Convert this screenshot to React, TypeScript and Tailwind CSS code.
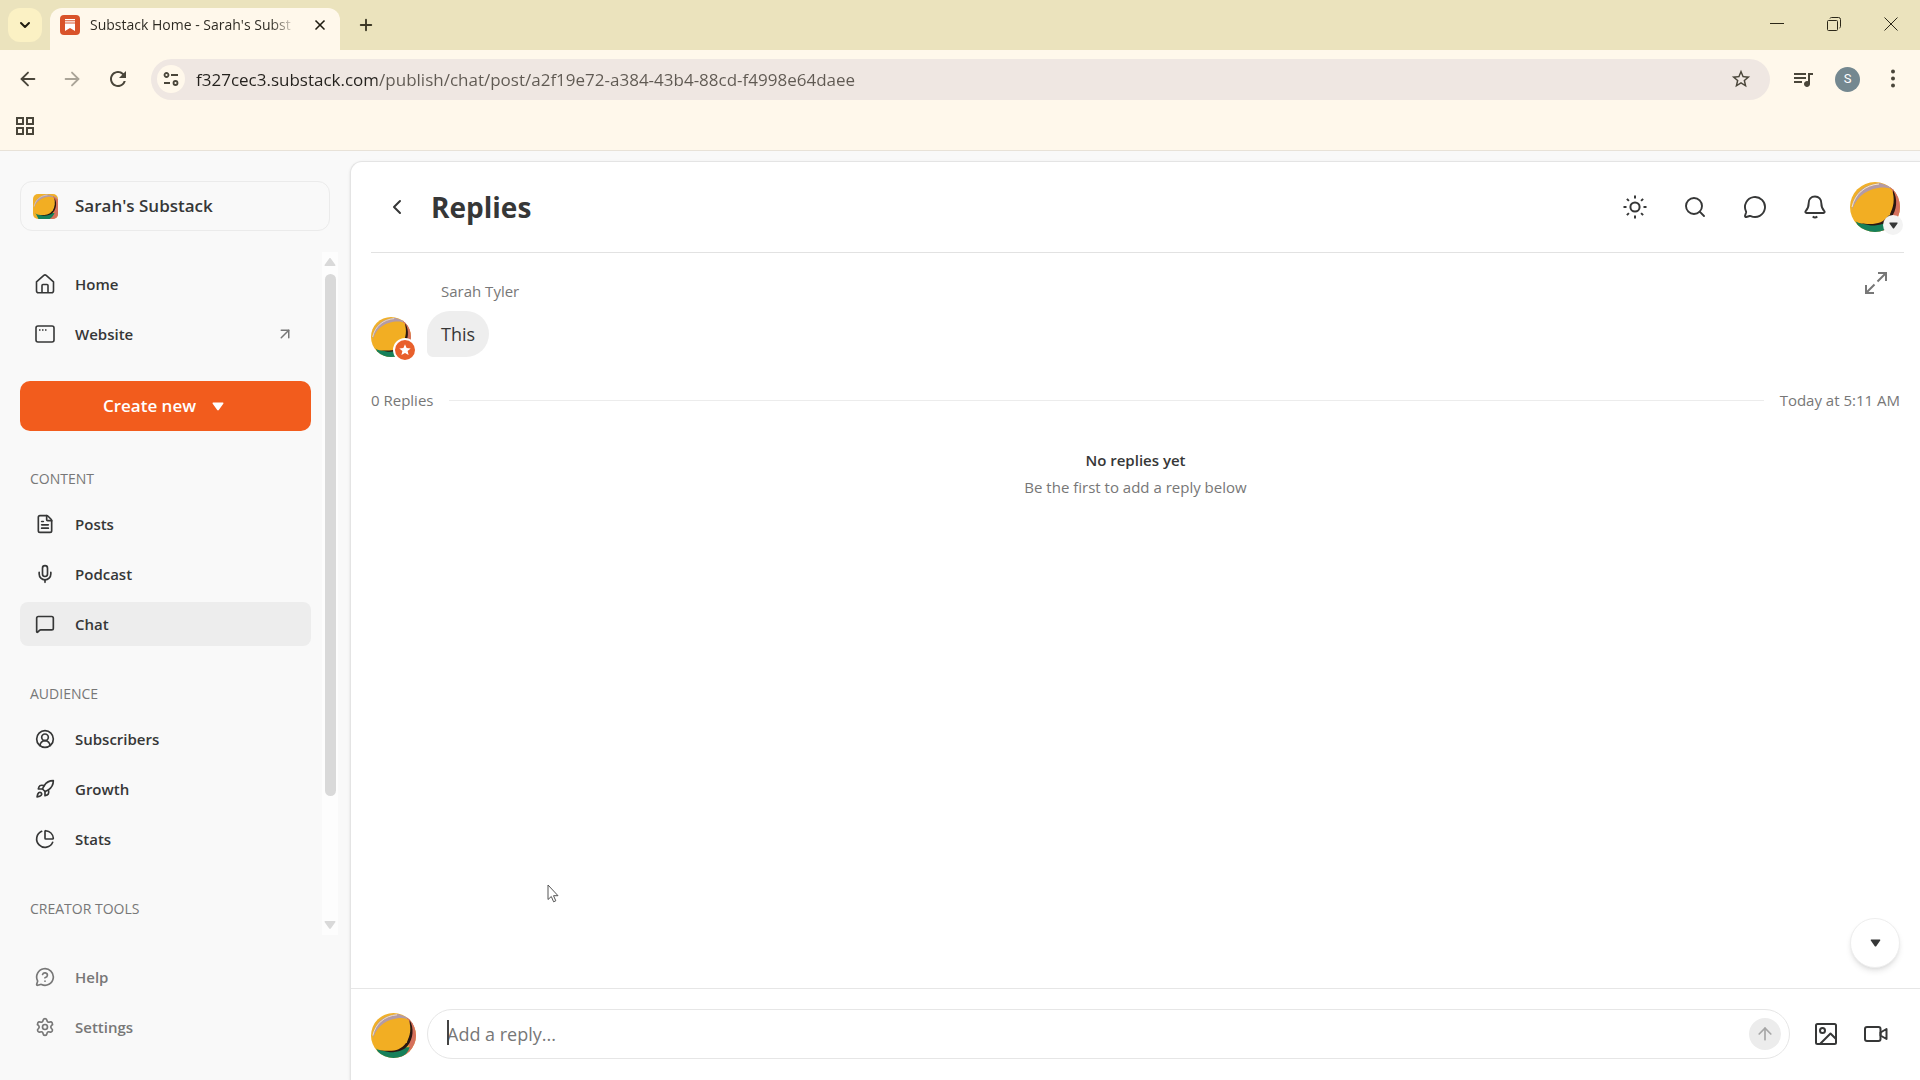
import { useId, type ReactNode } from 'react';
import {
  ArrowLeft,
  ArrowRight,
  ArrowUp,
  ArrowUpRight,
  ChartPie,
  ChevronDown,
  ChevronLeft,
  CircleUserRound,
  FileText,
  MessageCircle,
  MessageCircleQuestionMark,
  MessageSquare,
  Mic,
  Plus,
  Rocket,
  Search,
  Settings,
  X,
} from 'lucide-react';
import { MdOutlineStarBorder, MdQueueMusic, MdRefresh } from 'react-icons/md';

function MangoAvatar({ className }: { className: string }) {
  const id = useId();
  return (
    <svg viewBox="0 0 50 50" className={className} aria-hidden="true">
      <defs>
        <clipPath id={id}>
          <rect width="50" height="50" />
        </clipPath>
      </defs>
      <g clipPath={`url(#${id})`}>
        <rect width="50" height="50" fill="#f0b02a" />
        <path d="M2 24C5 9 16 2 30 1l18 6v10L4 32z" fill="#b39ba6" />
        <path d="M40 4l14 10v40H26l16-14z" fill="#d5705c" />
        <path d="M4 36l8 16h18c7-4 11-8 13-14L20 38z" fill="#16805a" />
        <path d="M43 8c5 9 4 20-2 28-4 5-10 7.500-20 7.500L9 41l31-8z" fill="#2a1712" />
        <path d="M2 30C4 18 14 8 28 6c6-1 12-.500 14 2 3 8 2 18-3 25-5 7-11 9-19 9-7 0-13-.500-16-4z" fill="#f2ae23" />
        <path d="M2 25C5 12 15 3 29 2" fill="none" stroke="#f8e7c4" strokeWidth="1" />
      </g>
    </svg>
  );
}

function Caret({ className }: { className: string }) {
  return (
    <svg viewBox="0 0 12 9" className={className} fill="currentColor" aria-hidden="true">
      <path d="M1.4 0.5h9.2c.8 0 1.1.7.7 1.3L6.8 8.1c-.4.6-1.2.6-1.6 0L.7 1.8C.3 1.2.6.5 1.4.5z" />
    </svg>
  );
}

function BrowserChrome() {
  return (
    <header className="shrink-0 border-b border-[#e8e2d8] bg-[#fff8eb] text-[#4a463a]">
      <div className="flex h-[50px] items-start bg-[#ebe3bd]">
        <button aria-label="Search tabs" className="mt-2 ml-2 flex size-[34px] items-center justify-center rounded-xl bg-[#fbf1c4] text-[#1f1c10]">
          <ChevronDown className="size-4" strokeWidth={3} />
        </button>
        <div className="mt-2 ml-2 flex h-[42px] w-[290px] items-center rounded-t-xl bg-[#fff8eb] pr-[10px] pb-2 pl-[10px]">
          <svg viewBox="0 0 20 20" className="size-5 shrink-0" aria-hidden="true">
            <rect width="20" height="20" rx="4" fill="#d9532a" />
            <path d="M5 4h10v1.2H5zM5 6.2h10v1.2H5zM5 8.4h10V16l-5-3-5 3z" fill="#fff" />
          </svg>
          <span className="ml-[10px] bg-linear-to-r from-[#2b2820] from-90% to-[#2b2820]/20 bg-clip-text text-sm whitespace-nowrap text-transparent">
            Substack Home - Sarah's Subst
          </span>
          <button aria-label="Close tab" className="ml-auto flex size-5 items-center justify-center text-[#1f1c10]">
            <X className="size-4" strokeWidth={2.5} />
          </button>
        </div>
        <button aria-label="New tab" className="mt-4 ml-[17px] flex size-[18px] items-center justify-center text-[#3d3826]">
          <Plus className="size-[18px] shrink-0" strokeWidth={2.5} />
        </button>
        <div className="mr-[22px] ml-auto flex h-12 items-center gap-[43px] text-[#2b2718]">
          <button aria-label="Minimize">
            <svg viewBox="0 0 14 14" className="size-[14px]" fill="none" stroke="currentColor">
              <path d="M0 6.5h14" />
            </svg>
          </button>
          <button aria-label="Restore">
            <svg viewBox="0 0 14 14" className="size-[14px]" fill="none" stroke="currentColor">
              <rect x="0.5" y="3.5" width="10" height="10" rx="1" />
              <path d="M3 1.500Q3.300 .5 4.500.5H11.500Q13.500.5 13.500 2.500V9.500Q13.500 10.700 12.500 11" />
            </svg>
          </button>
          <button aria-label="Close">
            <svg viewBox="0 0 14 14" className="size-[14px]" fill="none" stroke="currentColor">
              <path d="M.5.5l13 13M13.500.5l-13 13" />
            </svg>
          </button>
        </div>
      </div>

      <div className="flex h-[58px] items-center pr-[18px] pl-[17px]">
        <button aria-label="Back" className="mr-[22px]">
          <ArrowLeft className="size-[22px]" />
        </button>
        <button aria-label="Forward" className="mr-[23px] text-[#aaa497]">
          <ArrowRight className="size-[22px]" />
        </button>
        <button aria-label="Reload">
          <MdRefresh className="size-6" />
        </button>
        <div className="ml-[21px] flex h-[41px] flex-1 items-center rounded-full bg-[#efe7e2] pr-[18px] pl-[6px]">
          <button aria-label="View site information" className="flex size-7 items-center justify-center rounded-full bg-[#fff8eb]">
            <svg viewBox="0 0 16 16" className="size-4" fill="none" stroke="currentColor" strokeWidth="1.800">
              <circle cx="3.500" cy="4" r="2" />
              <path d="M8 4h7M1 12h6" />
              <circle cx="12.500" cy="12" r="2" />
            </svg>
          </button>
          <input
            aria-label="Address"
            readOnly
            value="f327cec3.substack.com/publish/chat/post/a2f19e72-a384-43b4-88cd-f4998e64daee"
            className="ml-[11px] h-8 min-w-0 flex-1 bg-[linear-gradient(90deg,#24211d_181px,#5f5952_181px)] bg-clip-text text-[17px] text-transparent outline-none"
          />
          <button aria-label="Bookmark this tab">
            <MdOutlineStarBorder className="size-[22px]" />
          </button>
        </div>
        <button aria-label="Media controls" className="ml-[21px]">
          <MdQueueMusic className="size-6" />
        </button>
        <button aria-label="Profile" className="ml-[20px] size-[25px] rounded-full bg-[#748890] font-[Roboto] text-[13px] text-white">
          S
        </button>
        <button aria-label="Menu" className="ml-[24px] w-[18px]">
          <svg viewBox="0 0 18 20" className="h-5 w-[18px]" fill="currentColor">
            <circle cx="9" cy="2.500" r="2" />
            <circle cx="9" cy="9.500" r="2" />
            <circle cx="9" cy="16.500" r="2" />
          </svg>
        </button>
      </div>

      <div className="flex h-[42px] items-center pb-[2px] pl-4">
        <button aria-label="Apps" className="mb-1">
          <svg viewBox="0 0 18 18" className="size-[18px]" fill="none" stroke="currentColor" strokeWidth="2">
            <path d="M1 1h6v6H1zM11 1h6v6h-6zM1 11h6v6H1zM11 11h6v6h-6z" />
          </svg>
        </button>
      </div>
    </header>
  );
}

type NavItemProps = { icon: ReactNode; label: string; active?: boolean; external?: boolean; muted?: boolean };

function NavItem({ icon, label, active, external, muted }: NavItemProps) {
  return (
    <a
      href="#"
      aria-current={active ? 'page' : undefined}
      className={`flex h-11 items-center rounded-lg pr-[17px] pl-[15px] text-[15px] font-semibold ${active ? 'bg-[#ededed]' : ''} ${muted ? 'text-[#777]' : 'text-[#363737]'}`}
    >
      {icon}
      <span className="ml-5">{label}</span>
      {external && <ArrowUpRight className="ml-auto size-[18px] text-[#777]" />}
    </a>
  );
}

function NavGroup({ title, children }: { title: string; children?: ReactNode }) {
  return (
    <section>
      <h2 className="mt-[38px] mb-[13px] ml-[10px] h-5 text-sm leading-5 font-medium text-[#777]">{title}</h2>
      <div className="flex flex-col gap-[6px]">{children}</div>
    </section>
  );
}

const icon = 'size-5 shrink-0';

function Sidebar() {
  return (
    <aside className="flex w-[350px] shrink-0 flex-col bg-[#f9f9f9] pt-[30px] pb-[31px] pl-5">
      <a href="#" className="mr-5 flex h-[50px] shrink-0 items-center rounded-xl border border-[#ebebeb] px-3 text-[17px] font-semibold text-[#363737]">
        <MangoAvatar className="size-[25px] rounded-[5px]" />
        <span className="ml-[17px]">Sarah's Substack</span>
      </a>

      <div className="mt-[21px] flex min-h-0 flex-1">
        <nav className="min-w-0 flex-1 overflow-hidden pt-[10px]">
          <div className="flex flex-col gap-[6px]">
            <NavItem
              label="Home"
              icon={
                <svg viewBox="0 0 20 20" className={icon} fill="none" stroke="currentColor" strokeWidth="1.600" strokeLinejoin="round">
                  <path d="M1.500 7.800 8.800 1.400a1.800 1.800 0 0 1 2.400 0l7.300 6.400v9a2 2 0 0 1-2 2h-13a2 2 0 0 1-2-2z" />
                  <path d="M7 18.500v-7a1 1 0 0 1 1-1h4a1 1 0 0 1 1 1v7" />
                </svg>
              }
            />
            <NavItem
              label="Website"
              external
              icon={
                <svg viewBox="0 0 20 20" className={icon} fill="none" stroke="currentColor" strokeWidth="1.600">
                  <rect x="1" y="2" width="18" height="16" rx="2" />
                  <path d="M4 6h1.500M7 6h1.500M10 6h1.500" />
                </svg>
              }
            />
          </div>
          <button className="mt-[25px] flex h-[50px] w-full items-center justify-center gap-4 rounded-[10px] bg-[#f25c1d] pr-1 text-[17px] font-semibold text-white">
            Create new
            <Caret className="h-[9px] w-3" />
          </button>
          <NavGroup title="CONTENT">
            <NavItem label="Posts" icon={<FileText className={icon} />} />
            <NavItem label="Podcast" icon={<Mic className={icon} />} />
            <NavItem label="Chat" active icon={<MessageSquare className={icon} />} />
          </NavGroup>
          <NavGroup title="AUDIENCE">
            <NavItem label="Subscribers" icon={<CircleUserRound className={icon} />} />
            <NavItem label="Growth" icon={<Rocket className={icon} />} />
            <NavItem label="Stats" icon={<ChartPie className={icon} />} />
          </NavGroup>
          <NavGroup title="CREATOR TOOLS" />
        </nav>
        <div className="mr-3 ml-[11px] flex w-4 flex-col items-center bg-white/60 py-[5px] text-[#d9d9d9]">
          <Caret className="h-[10px] w-3 shrink-0 rotate-180" />
          <div className="mt-[7px] w-[11px] flex-[522] rounded-full bg-[#d9d9d9]" />
          <div className="flex-[124]" />
          <Caret className="h-[10px] w-3 shrink-0" />
        </div>
      </div>

      <div className="mt-5 mr-10 flex flex-col gap-[6px]">
        <NavItem label="Help" muted icon={<MessageCircleQuestionMark className={icon} />} />
        <NavItem label="Settings" muted icon={<Settings className={icon} />} />
      </div>
    </aside>
  );
}

function MainHeader() {
  return (
    <div className="mr-4 ml-5 flex h-[91px] shrink-0 items-center border-b border-[#e2e2e2] pr-1">
      <button aria-label="Back" className="ml-3 flex size-7 items-center justify-center">
        <ChevronLeft className="size-6" />
      </button>
      <h1 className="ml-5 text-[28px] leading-9 font-bold">Replies</h1>
      <div className="ml-auto flex items-center gap-9">
        <button aria-label="Theme">
          <svg viewBox="0 0 24 24" className="size-6" fill="none" stroke="currentColor" strokeWidth="2">
            <circle cx="12" cy="12" r="4.600" />
            <path d="M12 .5v3M12 20.500v3M.5 12h3M20.500 12h3M3.900 3.900l2 2M18.100 18.100l2 2M3.900 20.100l2-2M18.100 5.900l2-2" />
          </svg>
        </button>
        <button aria-label="Search">
          <Search className="size-6" strokeWidth={1.9} />
        </button>
        <button aria-label="Messages">
          <MessageCircle className="size-6" strokeWidth={1.9} />
        </button>
        <button aria-label="Notifications">
          <svg viewBox="0 0 24 24" className="size-6" fill="none" stroke="currentColor" strokeWidth="1.900" strokeLinejoin="round">
            <path d="M12 1.500c-4 0-6.300 2.800-6.300 6.500 0 4-1.200 6.200-3 8.200-.7.900-.3 1.800.8 1.800h17c1.100 0 1.500-.9.8-1.800-1.800-2-3-4.200-3-8.200 0-3.700-2.300-6.500-6.300-6.500z" />
            <path d="M9.700 21.500q2.300 2 4.600 0" />
          </svg>
        </button>
        <button aria-label="Account" className="relative -ml-[13px]">
          <MangoAvatar className="size-[50px] rounded-full" />
          <span className="absolute -right-[3px] -bottom-[3px] flex size-5 items-center justify-center rounded-full bg-[#f3f3f3]">
            <Caret className="h-[7px] w-[9px]" />
          </span>
        </button>
      </div>
    </div>
  );
}

function Composer() {
  return (
    <form className="flex h-[92px] shrink-0 items-center border-t border-[#e6e6e6] pr-8 pb-[2px] pl-5">
      <MangoAvatar className="mt-1 size-[45px] shrink-0 rounded-full" />
      <div className="relative ml-[11px] flex h-[50px] min-w-0 flex-1 items-center rounded-full border border-[#e6e6e6] pr-2 pl-[19px]">
        <span className="absolute top-[10px] left-[19px] h-[25px] w-[2px] bg-[#444]" />
        <input
          aria-label="Add a reply"
          placeholder="Add a reply..."
          className="h-10 min-w-0 flex-1 bg-transparent text-[18px] outline-none placeholder:text-[#777]"
        />
        <button type="button" aria-label="Send" className="flex size-8 items-center justify-center rounded-full bg-[#ececec] text-[#a6a6a6]">
          <ArrowUp className="size-5" />
        </button>
      </div>
      <button type="button" aria-label="Add image" className="ml-6">
        <svg viewBox="0 0 24 24" className="size-6" fill="none" stroke="currentColor" strokeWidth="2" strokeLinejoin="round">
          <rect x="2" y="2" width="20" height="20" rx="1.500" />
          <circle cx="8.500" cy="8.500" r="2.500" />
          <path d="M6 22 16.500 11.500 22 17" />
        </svg>
      </button>
      <button type="button" aria-label="Add video" className="ml-[26px]">
        <svg viewBox="0 0 24 24" className="size-6" fill="none" stroke="currentColor" strokeWidth="2" strokeLinejoin="round">
          <rect x="1" y="5" width="15.500" height="14" rx="2" />
          <path d="M16.500 10.500 22.500 7v10l-6-3.500z" />
        </svg>
      </button>
    </form>
  );
}

export default function App() {
  return (
    <div className="relative flex h-screen flex-col overflow-hidden bg-[#f9f9f9] font-['Open_Sans','Noto_Sans',sans-serif] text-[#363737]">
      <BrowserChrome />
      <div className="flex min-h-0 flex-1">
        <Sidebar />
        <main className="mt-[10px] flex min-w-0 flex-1 flex-col rounded-tl-xl border-t border-l border-[#e4e4e4] bg-white shadow-sm">
          <MainHeader />
          <div className="relative min-h-0 flex-1 pr-5 pl-5 text-[15px] leading-5">
            <button aria-label="Expand" className="absolute top-[18px] right-8 text-[#777]">
              <svg viewBox="0 0 24 24" className="size-6" fill="none" stroke="currentColor" strokeWidth="2">
                <path d="M14 2h8v8M22 2l-8.500 8.500M10 22H2v-8M2 22l8.500-8.500" />
              </svg>
            </button>

            <p className="pt-7 pl-[70px] text-[#777]">Sarah Tyler</p>
            <div className="mt-[10px] flex items-end gap-4">
              <div className="relative">
                <MangoAvatar className="size-10 rounded-full" />
                <span className="absolute -right-[6px] -bottom-[5px] flex size-6 items-center justify-center rounded-full border-2 border-white bg-[#e8602c]">
                  <svg viewBox="0 0 12 12" className="size-3" fill="#fff" aria-hidden="true">
                    <path d="M6 .3l1.600 3.800 4.100.3-3.100 2.700 1 4L6 9l-3.600 2.100 1-4L.3 4.400l4.100-.3z" />
                  </svg>
                </span>
              </div>
              <p className="flex h-[46px] items-center rounded-[23px] rounded-bl-md bg-[#eee] px-[14px] text-[18px]">This</p>
            </div>

            <div className="mt-[33px] flex items-center text-[#777]">
              <span>0 Replies</span>
              <hr className="mx-4 flex-1 border-[#ececec]" />
              <time>Today at 5:11 AM</time>
            </div>

            <div className="mt-[38px] flex flex-col items-center gap-[3px] leading-6">
              <p className="font-semibold">No replies yet</p>
              <p className="text-[#777]">Be the first to add a reply below</p>
            </div>

            <button aria-label="Scroll to bottom" className="absolute right-5 bottom-5 flex size-[50px] items-center justify-center rounded-full border border-[#eee] bg-white shadow-md">
              <Caret className="h-2 w-[11px]" />
            </button>
          </div>
          <Composer />
        </main>
      </div>

      <svg viewBox="0 0 14 20" className="pointer-events-none absolute top-[884px] left-[547px] h-5 w-[14px]" fill="#fff" stroke="#555" aria-hidden="true">
        <path d="M1 1v14.500l3.300-3 2.300 5.300 2.200-1-2.300-5.100H11z" />
      </svg>
    </div>
  );
}
